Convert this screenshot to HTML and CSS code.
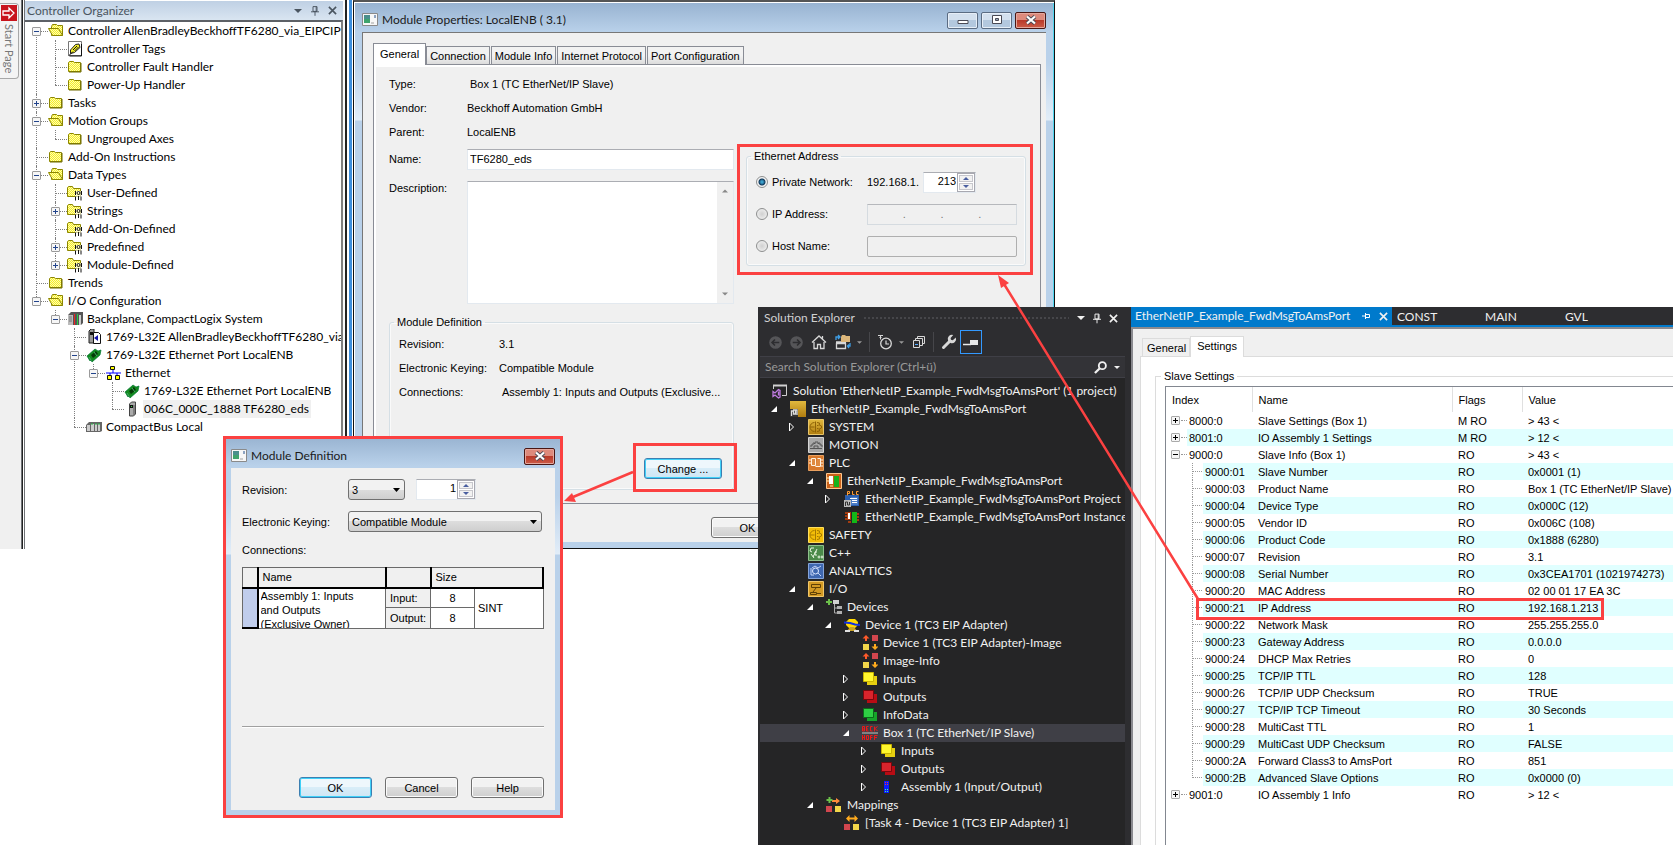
FILE: index.html
```html
<!DOCTYPE html>
<html lang="en">
<head>
<meta charset="utf-8">
<title>Module Properties: LocalENB</title>
<link rel="stylesheet" href="styles.css">
</head>
<body>
<svg class="defs" aria-hidden="true">
  <defs>
    <pattern id="dither" width="2" height="2" patternUnits="userSpaceOnUse"><rect width="2" height="2" fill="#f4ee2a"/><rect width="1" height="1" fill="#fffbb0"/><rect x="1" y="1" width="1" height="1" fill="#fffbb0"/></pattern>
    <linearGradient id="gold" x2="0" y2="1"><stop offset="0" stop-color="#e2b93e"/><stop offset="1" stop-color="#b07d10"/></linearGradient>
  </defs>
  <symbol id="folder" viewBox="0 0 16 16"><path d="M1.500 12.500V3.500l1-1h4l1 1h6v9z" fill="url(#dither)" stroke="#8c8600"/><path d="M14 4v9H2" fill="none" stroke="#6f6a00"/></symbol>
  <symbol id="open" viewBox="0 0 16 16"><path d="M3.500 12.500V3.500l1-2h4l1 1h5v10z" fill="url(#dither)" stroke="#8c8600"/><path d="M.5 5.500h10l4 7h-10z" fill="url(#dither)" stroke="#8c8600"/></symbol>
  <symbol id="typefolder" viewBox="0 0 16 16"><path d="M.5 11.500V2.500l1-1h4l1 2h7v8z" fill="url(#dither)" stroke="#8c8600"/><path d="M8 6h7v9H8z" fill="#fff" opacity=".6"/><g fill="none" stroke="#111"><path d="M8.500 6v4M14.500 6v4M8.500 11.500v4M11.500 11v4M14 11.500v4"/><circle cx="11.500" cy="8" r="1.500"/></g></symbol>
  <symbol id="tag" viewBox="0 0 16 16"><path d="M1.500.500h13v14h-13z" fill="#fff" stroke="#777"/><path d="M3.500 12.500V9l5-5.500 3.500-.5 1 3.500-5.500 5z" fill="#f4ee2a" stroke="#222"/><path d="M6 9l4-4M7.500 10l4-4M2 14.500l4-4M14.500 3v12h-12" fill="none" stroke="#111"/></symbol>
  <symbol id="rack" viewBox="0 0 16 16"><path d="M1 4l3-3h12v11l-2 2H1z" fill="#555"/><path d="M1 4h5v10H1z" fill="#bbb"/><path d="M2 6h3M2 8h3M2 10h3" stroke="#777"/><path d="M7 3h1v11H7z" fill="#e22"/><path d="M10 3h1v11h-1z" fill="#2c4"/><path d="M12 4h2v10h-2z" fill="#ccc"/></symbol>
  <symbol id="cpu" viewBox="0 0 16 16"><path d="M3 2l2-2h3v14H3z" fill="#999" stroke="#222"/><path d="M4 3h3v3H4z" fill="#111"/><path d="M7.500 3.500h5l2 2v9h-7z" fill="#fff" stroke="#111"/><path d="M12 6v6L8 9z" fill="#11a"/></symbol>
  <symbol id="card" viewBox="0 0 16 16"><path d="M1 9l8-7 3 2 3-1-1 5-8 7-1-2-1 1z" fill="#138a1e" stroke="#073" stroke-width=".7"/><path d="M5 8l5-4 2 3-5 4z" fill="#043a08"/><path d="M3 10l2 3M8 5l3 4" stroke="#4a6"/></symbol>
  <symbol id="net" viewBox="0 0 16 16"><path d="M8 4v4M1 8h15M5 8v3M12 8v3" stroke="#00f" fill="none"/><path d="M5.500 1.500h4v3h-4zM2.500 10.500h4v4h-4zM10.500 10.500h4v4h-4z" fill="#ff0" stroke="#111"/></symbol>
  <symbol id="module" viewBox="0 0 16 16"><path d="M5.500 3l2-2h4v12l-2 2h-4z" fill="#aaa" stroke="#444"/><path d="M6 4h3v3H6z" fill="#111"/><path d="M7 5h1v1H7z" fill="#3c4"/><path d="M10 4v10" stroke="#555"/></symbol>
  <symbol id="bus" viewBox="0 0 16 16"><path d="M0 6l3-3h13v9l-2 1H0z" fill="#666"/><path d="M1 6h3v6H1zM5 5h3v7H5zM9 5h2v7H9zM12 5h2v7h-2z" fill="#ccc"/><path d="M5 5h2M9 5h2M12 5h2" stroke="#2b4"/></symbol>
  <symbol id="app" viewBox="0 0 16 14"><path d="M.5.500h15v12H.5z" fill="#f7f7f7" stroke="#8a8a8a"/><path d="M2 2h6v8H2z" fill="#4a8f8c"/><path d="M2 6h6v4H2z" fill="#3fa36c"/><path d="M9 9h3v2H9z" fill="#ccc"/><path d="M13 2v3" stroke="#24508c"/></symbol>
  <symbol id="pin" viewBox="0 0 10 12"><path d="M2.500.500h5v6h-5zM0 7h10M5 7v5M6.500 1v6" fill="none" stroke="currentColor" stroke-width="1.200"/></symbol>
  <symbol id="cross" viewBox="0 0 10 10"><path d="M1 1l8 8M9 1l-8 8" fill="none" stroke="currentColor" stroke-width="1.800"/></symbol>
  <symbol id="down" viewBox="0 0 8 4"><path d="M0 0h8L4 4z" fill="currentColor"/></symbol>
  <symbol id="up" viewBox="0 0 8 4"><path d="M0 4h8L4 0z" fill="currentColor"/></symbol>
  <symbol id="bigx" viewBox="0 0 12 10"><path d="M2 1.500l8 7M10 1.500l-8 7" stroke="#4a4a55" stroke-width="4"/><path d="M2 1.500l8 7M10 1.500l-8 7" stroke="#fff" stroke-width="2.200"/></symbol>

  <symbol id="back" viewBox="0 0 12 12"><circle cx="6" cy="6" r="5.800" fill="#555558"/><path d="M9.500 6H3M5.500 3.200L2.800 6l2.700 2.800" fill="none" stroke="#2d2d30" stroke-width="1.500"/></symbol>
  <symbol id="fwd" viewBox="0 0 12 12"><circle cx="6" cy="6" r="5.800" fill="#555558"/><path d="M2.500 6H9M6.500 3.200L9.200 6 6.500 8.800" fill="none" stroke="#2d2d30" stroke-width="1.500"/></symbol>
  <symbol id="home" viewBox="0 0 16 16"><path d="M1 8.500L8 2l7 6.500M3 8v6.500h3.500v-4h3v4H13V8M11.500 4.500V2" fill="none" stroke="#d8d8d8" stroke-width="1.300"/></symbol>
  <symbol id="sync" viewBox="0 0 16 16"><path d="M1.500 9.500v5h9v-5zM1 8h10" fill="none" stroke="#d8d8d8" stroke-width="1.300"/><path d="M6 3l1-2h3l1 1h4v6H6z" fill="#dcb67a"/><path d="M1 6V3h3M3 1l2 2-2 2M15 9v3h-2M14 10.500L12.500 12l1.500 2" fill="none" stroke="#3fa0e8" stroke-width="1.300"/></symbol>
  <symbol id="clock" viewBox="0 0 16 16"><path d="M1 1.500h5M3.500 1.500v4M2.500 3.500h2" stroke="#d8d8d8" fill="none"/><circle cx="9" cy="9.500" r="5.300" fill="none" stroke="#d8d8d8" stroke-width="1.300"/><path d="M9 6.500V10h3" fill="none" stroke="#d8d8d8" stroke-width="1.200"/></symbol>
  <symbol id="collapse" viewBox="0 0 14 14"><path d="M5.500 4V1.500h7v7H10M3.500 6V3.500h7v7H8M1.500 5.500h6v7h-6z" fill="none" stroke="#d8d8d8"/><path d="M3 9.500h3" stroke="#55aaff"/></symbol>
  <symbol id="wrench" viewBox="0 0 16 16"><path d="M2.500 13.500L9 7" stroke="#d8d8d8" stroke-width="3" stroke-linecap="round"/><path d="M14.800 3.600l-3 2.600-1.900-.4-.3-1.900L12.200 1A4.200 4.200 0 0 0 7 6.400l2.600 2.700a4.200 4.200 0 0 0 5.200-5.500z" fill="#d8d8d8"/></symbol>
  <symbol id="preview" viewBox="0 0 16 8"><path d="M0 6.500h8" stroke="#e8e8e8" stroke-width="1.500"/><path d="M7 2h8v5H7z" fill="#e8e8e8"/></symbol>
  <symbol id="lens" viewBox="0 0 14 14"><circle cx="9" cy="5" r="3.800" fill="none" stroke="#f1f1f1" stroke-width="2"/><path d="M6 8l-5 5" stroke="#f1f1f1" stroke-width="2.400"/></symbol>

  <symbol id="sln" viewBox="0 0 16 16"><path d="M1.500 6V2.500h13v10H10" fill="none" stroke="#d0d0d0"/><path d="M1 2.500h14" stroke="#d0d0d0" stroke-width="2"/><path d="M6.500 6.500L3 10 1 8.500v5L3 12l3.500 3 1.500-.8V7.300zM6.500 8.500v4" fill="none" stroke="#c07be0" stroke-width="1.300"/></symbol>
  <symbol id="tcproj" viewBox="0 0 16 16"><path d="M0 0h16v16H0z" fill="url(#gold)"/><path d="M0 8h8v8H0z" fill="#333"/><path d="M1.500 15v-5h2v3h2v-3.500M3 9h4v5" fill="none" stroke="#ddd" stroke-width="1.300"/></symbol>
  <symbol id="system" viewBox="0 0 16 16"><path d="M.5.500h15v15H.5z" fill="url(#gold)" stroke="#e8c66a"/><path d="M7.500 2.500v11M6.500 3.500A4.500 4.500 0 0 0 6.500 12.500M9 3.500l2.500.5-.3 2L13.500 7v2l-2.300 1 .3 2-2.500.5M2.500 8h4M9 6.500h1.500M9 9.500h1.500" fill="none" stroke="#8e6206"/></symbol>
  <symbol id="motion" viewBox="0 0 16 16"><path d="M.5.500h15v15H.5z" fill="#a8a8a8" stroke="#d5d5d5"/><path d="M2 11.500h12M3 10V8h2V6h1l1 1V5h3v2l1-1h1v2h2v2M6 11V9h4v2" fill="none" stroke="#555"/></symbol>
  <symbol id="plc" viewBox="0 0 16 16"><path d="M.5.500h15v15H.5z" fill="#d8792c" stroke="#e9a05f"/><path d="M3.500 3.500h4v7h-4zM9.500 3.500h3v8h-5" fill="#e08a40" stroke="#fff3e3"/><path d="M1 5h2M1 8h2M13 5h2M13 8h2M13 11h2" stroke="#fff3e3"/></symbol>
  <symbol id="plcproj" viewBox="0 0 16 16"><path d="M.5.500h15v15H.5z" fill="#c9621a" stroke="#ffc78e"/><path d="M3 3h4v8H3z" fill="#fff"/><path d="M8 3h5v11H8z" fill="#17b31c"/><path d="M1 5h2M1 8h2M4 13h3" stroke="#fff0a8"/></symbol>
  <symbol id="plcdoc" viewBox="0 0 16 16"><path d="M1 4h14v11H1z" fill="#2b5fae"/><path d="M3.500 4.500V.500h2v2h-2M8.500 0v3.500h2M14.500.500h-2v3h2" fill="none" stroke="#ff9b30"/><path d="M7 6h7v8H7z" fill="#4b7cc4"/><path d="M6 7.500h7M8 9.500h5M8 11.500h5" stroke="#fff"/><path d="M0 9h7v7H0z" fill="#bbb"/><path d="M1.500 15v-4h2v3h2v-3" fill="none" stroke="#333"/></symbol>
  <symbol id="inst" viewBox="0 0 16 16"><path d="M3.500 3.500h3v7h-3z" fill="#fff" stroke="#b33c0a"/><path d="M8 3h5v11H8z" fill="#12b818"/><path d="M1 4h2M1 7h2M1 10h2M13 5h2M13 8h2M13 11h2M4 13h3" stroke="#d0440a" stroke-width="1.500"/></symbol>
  <symbol id="safety" viewBox="0 0 16 16"><path d="M.5.500h15v15H.5z" fill="#f3bd08" stroke="#ffdf5c"/><path d="M7.500 2.500v11M6.500 3.500A4.500 4.500 0 0 0 6.500 12.500M9 3.500l2.500.5-.3 2L13.500 7v2l-2.300 1 .3 2-2.500.5M2.500 8h4M9 6.500h1.500M9 9.500h1.500" fill="none" stroke="#a67a00"/></symbol>
  <symbol id="cpp" viewBox="0 0 16 16"><path d="M.5.500h15v15H.5z" fill="#4b8a4a" stroke="#8fc08c"/><path d="M6 3H3L2 6l2 1M5 12l4-8M9 7H7v3h2M9.500 12h3M11 10.500v3M13 12h2.500M14 10.500v3M3 9l3 4" fill="none" stroke="#e8f5e2"/></symbol>
  <symbol id="analytics" viewBox="0 0 16 16"><path d="M.5.500h15v15H.5z" fill="#3f68b0" stroke="#86a5da"/><circle cx="7.500" cy="8" r="3" fill="none" stroke="#dfe9ff"/><path d="M10 10l3 3M3 5v7h3M4 5l3-2 3 2 3-2" fill="none" stroke="#c5d5f8"/></symbol>
  <symbol id="io" viewBox="0 0 16 16"><path d="M.5.500h15v15H.5z" fill="#d39a24" stroke="#f0c668"/><path d="M3.500 3.500h9v3h-9zM2.500 11.500h6v2h-6zM8 7l-3 4M9 12.500h4" fill="none" stroke="#5f4005"/></symbol>
  <symbol id="devices" viewBox="0 0 16 16"><path d="M7 1h6v4H7z" fill="#d0d0d0"/><path d="M8.500 5v9H11M8.500 9H11" fill="none" stroke="#aaa"/><path d="M11 7h5v3h-5zM11 12h5v3h-5z" fill="#b0b0b0"/><path d="M3 0v6M0 3h6" stroke="#6cc04a" stroke-width="2"/></symbol>
  <symbol id="device" viewBox="0 0 16 16"><path d="M5 2h6l3 3v3l-3 3H5L2 8V5z" fill="#ffd800"/><path d="M0 5.500l6 .5 5 1.500 5 .5" fill="none" stroke="#1030e0" stroke-width="2"/><path d="M6 10h4l3 4H3z" fill="#c9a227"/><path d="M1 14h5M10 14h5" stroke="#e0e0e0" stroke-width="2"/></symbol>
  <symbol id="image" viewBox="0 0 16 16"><path d="M10 0h6v6h-6z" fill="#d2464e"/><path d="M1 9h6v6H1z" fill="#f2d64a"/><path d="M4 0l3.500 3.500H5V6H3V3.500H.500z" fill="#ff5a2a"/><path d="M13 15l3.500-3.500H14V9h-2v2.500H9.500z" fill="#ffab1e"/></symbol>
  <symbol id="in" viewBox="0 0 16 16"><path d="M5 5h10v9H5z" fill="#e6cf10"/><path d="M1.500 1.500h10v9h-10z" fill="#fff72e" stroke="#c9b400"/></symbol>
  <symbol id="out" viewBox="0 0 16 16"><path d="M5 5h10v9H5z" fill="#b80c14"/><path d="M1.500 1.500h10v9h-10z" fill="#d9242c" stroke="#7a060c"/></symbol>
  <symbol id="info" viewBox="0 0 16 16"><path d="M5 5h10v9H5z" fill="#16a52a"/><path d="M1.500 1.500h10v9h-10z" fill="#2ed044" stroke="#0a6a1a"/></symbol>
  <symbol id="box" viewBox="0 0 16 16"><path d="M0 8h16" stroke="#999" stroke-width="1.500"/><path d="M.5 1.500v4.500h2V1.500zM.5 4h2M6.500 1.500h-2v4.500h2M4.500 4h1.500M10.500 1.500h-2v4.500h2M12.500 1.500v5M15.500 1.500l-2.500 2 2.500 2.500M.5 10v5M2.500 10v5M.5 12.500h2M4.500 10.500h2v4h-2zM8.500 15v-4.500h2M8.500 12.500h2M12.500 15v-4.500h3M12.500 12.500h2.500" fill="none" stroke="#f01818"/></symbol>
  <symbol id="asm" viewBox="0 0 16 16"><path d="M4 2h5v12H4z" fill="#0a1cff"/><path d="M5 3h1v1H5zM7 3h1v1H7zM5 5h1v1H5zM7 5h1v1H7z" fill="#f33"/><path d="M5 10h1v1H5zM7 10h1v1H7zM5 12h1v1H5zM7 12h1v1H7z" fill="#4f8"/></symbol>
  <symbol id="maps" viewBox="0 0 16 16"><path d="M0 9h6v6H0z" fill="#d2464e"/><path d="M9 9h6v6H9z" fill="#f2d64a"/><path d="M6 3h4V1l4 3-4 3V5H6z" fill="#ff8a3a"/><path d="M3.500 0v6M.5 3h6" stroke="#6cc04a" stroke-width="2"/></symbol>
  <symbol id="task" viewBox="0 0 16 16"><path d="M0 9h6v6H0z" fill="#d2464e"/><path d="M9 9h6v6H9z" fill="#f2d64a"/><path d="M2 3.500L5.500 0v2.500h5V0L14 3.500 10.500 7V4.500h-5V7z" fill="#ffab1e"/></symbol>
  <symbol id="expanded" viewBox="0 0 8 10"><path d="M7 2v6H1z" fill="#fff"/></symbol>
  <symbol id="collapsed" viewBox="0 0 8 10"><path d="M1.500 1l4 4-4 4z" fill="none" stroke="#fff"/></symbol>
</svg>

<main class="desktop">

  <section class="organizer">
    <div class="dock">
      <button class="dock-tab"><svg width="16" height="16" viewBox="0 0 16 16"><path d="M0 0h16v16H0z" fill="#c8141c"/><path d="M2 6h6V3l5 5-5 5v-3H2z" fill="none" stroke="#fff" stroke-width="1.300"/></svg><span>Start Page</span></button>
    </div>
    <div class="organizer-panel">
      <header class="organizer-title">
        <h2>Controller Organizer</h2>
        <button class="plain" aria-label="Menu"><svg width="8" height="4"><use href="#down"/></svg></button>
        <button class="plain" aria-label="Pin"><svg width="8" height="10"><use href="#pin"/></svg></button>
        <button class="plain" aria-label="Close"><svg width="9" height="9"><use href="#cross"/></svg></button>
      </header>
      <ul class="tree">
        <li><div class="node"><button class="toggle" aria-label="Collapse"></button><svg><use href="#open"/></svg>Controller AllenBradleyBeckhoffTF6280_via_EIPCIP</div>
          <ul>
            <li><div class="node"><svg><use href="#tag"/></svg>Controller Tags</div></li>
            <li><div class="node"><svg><use href="#folder"/></svg>Controller Fault Handler</div></li>
            <li><div class="node"><svg><use href="#folder"/></svg>Power-Up Handler</div></li>
          </ul></li>
        <li><div class="node"><button class="toggle closed" aria-label="Expand"></button><svg><use href="#folder"/></svg>Tasks</div></li>
        <li><div class="node"><button class="toggle" aria-label="Collapse"></button><svg><use href="#open"/></svg>Motion Groups</div>
          <ul><li><div class="node"><svg><use href="#folder"/></svg>Ungrouped Axes</div></li></ul></li>
        <li><div class="node"><svg><use href="#folder"/></svg>Add-On Instructions</div></li>
        <li><div class="node"><button class="toggle" aria-label="Collapse"></button><svg><use href="#open"/></svg>Data Types</div>
          <ul>
            <li><div class="node"><svg><use href="#typefolder"/></svg>User-Defined</div></li>
            <li><div class="node"><button class="toggle closed" aria-label="Expand"></button><svg><use href="#typefolder"/></svg>Strings</div></li>
            <li><div class="node"><svg><use href="#typefolder"/></svg>Add-On-Defined</div></li>
            <li><div class="node"><button class="toggle closed" aria-label="Expand"></button><svg><use href="#typefolder"/></svg>Predefined</div></li>
            <li><div class="node"><button class="toggle closed" aria-label="Expand"></button><svg><use href="#typefolder"/></svg>Module-Defined</div></li>
          </ul></li>
        <li><div class="node"><svg><use href="#folder"/></svg>Trends</div></li>
        <li><div class="node"><button class="toggle" aria-label="Collapse"></button><svg><use href="#open"/></svg>I/O Configuration</div>
          <ul>
            <li><div class="node"><button class="toggle" aria-label="Collapse"></button><svg><use href="#rack"/></svg>Backplane, CompactLogix System</div>
              <ul>
                <li><div class="node"><svg><use href="#cpu"/></svg>1769-L32E AllenBradleyBeckhoffTF6280_via_EIPCIP</div></li>
                <li><div class="node"><button class="toggle" aria-label="Collapse"></button><svg><use href="#card"/></svg>1769-L32E Ethernet Port LocalENB</div>
                  <ul>
                    <li><div class="node"><button class="toggle" aria-label="Collapse"></button><svg><use href="#net"/></svg>Ethernet</div>
                      <ul>
                        <li><div class="node"><svg><use href="#card"/></svg>1769-L32E Ethernet Port LocalENB</div></li>
                        <li><div class="node"><svg><use href="#module"/></svg><span class="selected">006C_000C_1888 TF6280_eds</span></div></li>
                      </ul></li>
                  </ul></li>
                <li><div class="node"><svg><use href="#bus"/></svg>CompactBus Local</div></li>
              </ul></li>
          </ul></li>
      </ul>
    </div>
  </section>

  <section class="window properties">
    <header class="titlebar">
      <svg width="16" height="14"><use href="#app"/></svg>
      <h2>Module Properties: LocalENB ( 3.1)</h2>
      <button class="caption" aria-label="Minimize"><svg width="12" height="10" viewBox="0 0 12 10"><path d="M1 5.500h10v3H1z" fill="#fff" stroke="#4a4a55"/></svg></button>
      <button class="caption" aria-label="Maximize"><svg width="12" height="10" viewBox="0 0 12 10"><path d="M1.500.500h9v8h-9z" fill="#fff" stroke="#4a4a55"/><path d="M4.500 3.500h3v2h-3z" fill="#9ab" stroke="#4a4a55"/></svg></button>
      <button class="caption close" aria-label="Close"><svg width="12" height="10"><use href="#bigx"/></svg></button>
    </header>
    <div class="client">
      <div class="tabs" role="tablist">
        <button role="tab" aria-selected="true">General</button>
        <button role="tab">Connection</button>
        <button role="tab">Module Info</button>
        <button role="tab">Internet Protocol</button>
        <button role="tab">Port Configuration</button>
      </div>
      <div class="tabpage">
        <div class="left-column">
          <dl class="facts">
            <dt>Type:</dt><dd class="indented">Box 1 (TC EtherNet/IP Slave)</dd>
            <dt>Vendor:</dt><dd>Beckhoff Automation GmbH</dd>
            <dt>Parent:</dt><dd>LocalENB</dd>
          </dl>
          <div class="fields">
            <label for="name">Name:</label><input id="name" class="text" value="TF6280_eds">
            <label for="desc">Description:</label>
            <div class="memo"><textarea id="desc"></textarea>
              <div class="scroll"><svg width="6" height="4"><use href="#up"/></svg><svg width="6" height="4"><use href="#down"/></svg></div></div>
          </div>
          <fieldset class="group definition">
            <legend>Module Definition</legend>
            <dl class="facts">
              <dt>Revision:</dt><dd>3.1</dd>
              <dt>Electronic Keying:</dt><dd>Compatible Module</dd>
              <dt>Connections:</dt><dd class="indented">Assembly 1: Inputs and Outputs (Exclusive...</dd>
            </dl>
            <button class="btn primary change">Change ...</button>
          </fieldset>
        </div>
        <fieldset class="group address">
          <legend>Ethernet Address</legend>
          <input type="radio" name="addr" id="private" checked><label for="private">Private Network:</label>
          <div class="octet"><span>192.168.1.</span><span class="spinner"><input aria-label="Last octet" value="213"><span class="steps"><button aria-label="Up"><svg width="6" height="3"><use href="#up"/></svg></button><button aria-label="Down"><svg width="6" height="3"><use href="#down"/></svg></button></span></span></div>
          <input type="radio" name="addr" id="ip"><label for="ip">IP Address:</label>
          <div class="ipfield"><input aria-label="Octet 1" disabled>.<input aria-label="Octet 2" disabled>.<input aria-label="Octet 3" disabled>.<input aria-label="Octet 4" disabled></div>
          <input type="radio" name="addr" id="host"><label for="host">Host Name:</label>
          <input class="hostfield" aria-label="Host name value" disabled>
        </fieldset>
      </div>
      <footer class="actions"><button class="btn">OK</button></footer>
    </div>
  </section>

  <section class="window dialog">
    <header class="titlebar">
      <svg width="16" height="14"><use href="#app"/></svg>
      <h2>Module Definition</h2>
      <button class="caption close" aria-label="Close"><svg width="12" height="10"><use href="#bigx"/></svg></button>
    </header>
    <div class="client">
      <div class="form">
        <label for="rev">Revision:</label>
        <div class="revision"><span class="combo"><select id="rev"><option>3</option></select></span><span class="spinner"><input aria-label="Minor revision" value="1"><span class="steps"><button aria-label="Up"><svg width="6" height="3"><use href="#up"/></svg></button><button aria-label="Down"><svg width="6" height="3"><use href="#down"/></svg></button></span></span></div>
        <label for="keying">Electronic Keying:</label>
        <span class="combo keying"><select id="keying"><option>Compatible Module</option></select></span>
      </div>
      <p class="caption-text">Connections:</p>
      <table class="connections">
        <colgroup><col class="c-mark"><col class="c-name"><col class="c-dir"><col class="c-size"><col></colgroup>
        <thead><tr><th></th><th>Name</th><th></th><th colspan="2">Size</th></tr></thead>
        <tbody>
          <tr><td rowspan="2" class="mark"></td><td rowspan="2" class="name"><div>Assembly 1: Inputs<br>and Outputs<br>(Exclusive Owner)</div></td><td class="dir">Input:</td><td class="num">8</td><td rowspan="2" class="type">SINT</td></tr>
          <tr><td class="dir">Output:</td><td class="num">8</td></tr>
        </tbody>
      </table>
      <hr>
      <footer class="actions"><button class="btn primary">OK</button><button class="btn">Cancel</button><button class="btn">Help</button></footer>
    </div>
  </section>

  <section class="explorer">
    <header class="explorer-title">
      <h2>Solution Explorer</h2><span class="grip"></span>
      <button class="plain" aria-label="Menu"><svg width="8" height="4"><use href="#down"/></svg></button>
      <button class="plain" aria-label="Pin"><svg width="8" height="11"><use href="#pin"/></svg></button>
      <button class="plain" aria-label="Close"><svg width="9" height="9"><use href="#cross"/></svg></button>
    </header>
    <div class="toolbar">
      <button class="plain nav" aria-label="Back"><svg width="13" height="13"><use href="#back"/></svg></button>
      <button class="plain nav" aria-label="Forward"><svg width="13" height="13"><use href="#fwd"/></svg></button>
      <button class="plain" aria-label="Home"><svg width="16" height="16"><use href="#home"/></svg></button>
      <button class="plain split" aria-label="Sync"><svg width="16" height="16"><use href="#sync"/></svg><svg width="5" height="3"><use href="#down"/></svg></button>
      <span class="rule"></span>
      <button class="plain split" aria-label="Pending changes"><svg width="16" height="16"><use href="#clock"/></svg><svg width="5" height="3"><use href="#down"/></svg></button>
      <button class="plain" aria-label="Collapse all"><svg width="14" height="14"><use href="#collapse"/></svg></button>
      <span class="rule"></span>
      <button class="plain" aria-label="Properties"><svg width="16" height="16"><use href="#wrench"/></svg></button>
      <button class="plain active" aria-label="Preview"><svg width="16" height="8"><use href="#preview"/></svg></button>
    </div>
    <div class="search">
      <input aria-label="Search Solution Explorer" placeholder="Search Solution Explorer (Ctrl+ü)">
      <button class="plain" aria-label="Search"><svg width="13" height="13"><use href="#lens"/></svg></button>
      <button class="plain" aria-label="Search options"><svg width="6" height="3"><use href="#down"/></svg></button>
    </div>
    <ul class="solution">
      <li class="l0"><svg><use href="#sln"/></svg>Solution 'EtherNetIP_Example_FwdMsgToAmsPort' (1 project)</li>
      <li class="l1"><svg class="arrow"><use href="#expanded"/></svg><svg><use href="#tcproj"/></svg>EtherNetIP_Example_FwdMsgToAmsPort</li>
      <li class="l2"><svg class="arrow"><use href="#collapsed"/></svg><svg><use href="#system"/></svg>SYSTEM</li>
      <li class="l2"><i class="arrow"></i><svg><use href="#motion"/></svg>MOTION</li>
      <li class="l2"><svg class="arrow"><use href="#expanded"/></svg><svg><use href="#plc"/></svg>PLC</li>
      <li class="l3"><svg class="arrow"><use href="#expanded"/></svg><svg><use href="#plcproj"/></svg>EtherNetIP_Example_FwdMsgToAmsPort</li>
      <li class="l4"><svg class="arrow"><use href="#collapsed"/></svg><svg><use href="#plcdoc"/></svg>EtherNetIP_Example_FwdMsgToAmsPort Project</li>
      <li class="l4"><i class="arrow"></i><svg><use href="#inst"/></svg>EtherNetIP_Example_FwdMsgToAmsPort Instance</li>
      <li class="l2"><i class="arrow"></i><svg><use href="#safety"/></svg>SAFETY</li>
      <li class="l2"><i class="arrow"></i><svg><use href="#cpp"/></svg>C++</li>
      <li class="l2"><i class="arrow"></i><svg><use href="#analytics"/></svg>ANALYTICS</li>
      <li class="l2"><svg class="arrow"><use href="#expanded"/></svg><svg><use href="#io"/></svg>I/O</li>
      <li class="l3"><svg class="arrow"><use href="#expanded"/></svg><svg><use href="#devices"/></svg>Devices</li>
      <li class="l4"><svg class="arrow"><use href="#expanded"/></svg><svg><use href="#device"/></svg>Device 1 (TC3 EIP Adapter)</li>
      <li class="l5"><i class="arrow"></i><svg><use href="#image"/></svg>Device 1 (TC3 EIP Adapter)-Image</li>
      <li class="l5"><i class="arrow"></i><svg><use href="#image"/></svg>Image-Info</li>
      <li class="l5"><svg class="arrow"><use href="#collapsed"/></svg><svg><use href="#in"/></svg>Inputs</li>
      <li class="l5"><svg class="arrow"><use href="#collapsed"/></svg><svg><use href="#out"/></svg>Outputs</li>
      <li class="l5"><svg class="arrow"><use href="#collapsed"/></svg><svg><use href="#info"/></svg>InfoData</li>
      <li class="l5 current"><svg class="arrow"><use href="#expanded"/></svg><svg><use href="#box"/></svg>Box 1 (TC EtherNet/IP Slave)</li>
      <li class="l6"><svg class="arrow"><use href="#collapsed"/></svg><svg><use href="#in"/></svg>Inputs</li>
      <li class="l6"><svg class="arrow"><use href="#collapsed"/></svg><svg><use href="#out"/></svg>Outputs</li>
      <li class="l6"><svg class="arrow"><use href="#collapsed"/></svg><svg><use href="#asm"/></svg>Assembly 1 (Input/Output)</li>
      <li class="l3"><svg class="arrow"><use href="#expanded"/></svg><svg><use href="#maps"/></svg>Mappings</li>
      <li class="l4"><i class="arrow"></i><svg><use href="#task"/></svg>[Task 4 - Device 1 (TC3 EIP Adapter) 1]</li>
    </ul>
  </section>

  <section class="editor">
    <nav class="documents">
      <a href="#doc" class="open"><span>EtherNetIP_Example_FwdMsgToAmsPort</span><svg width="8" height="8" viewBox="0 0 8 8"><path d="M0 4h3M3.500 1v6M3.500 2.500h4v3h-4" fill="none" stroke="#fff"/></svg><svg width="9" height="9"><use href="#cross"/></svg></a>
      <a href="#const">CONST</a><a href="#main">MAIN</a><a href="#gvl">GVL</a>
    </nav>
    <div class="document">
      <div class="doc-tabs" role="tablist"><button role="tab">General</button><button role="tab" aria-selected="true">Settings</button></div>
      <div class="doc-page">
        <fieldset class="slave">
          <legend>Slave Settings</legend>
          <div class="listview">
          <table>
            <colgroup><col class="c-index"><col class="c-label"><col class="c-flags"><col></colgroup>
            <thead><tr><th>Index</th><th>Name</th><th>Flags</th><th>Value</th></tr></thead>
            <tbody>
              <tr class="top"><td><button class="toggle closed" aria-label="Expand"></button>8000:0</td><td>Slave Settings (Box 1)</td><td>M RO</td><td>&gt; 43 &lt;</td></tr>
              <tr class="top"><td><button class="toggle closed" aria-label="Expand"></button>8001:0</td><td>IO Assembly 1 Settings</td><td>M RO</td><td>&gt; 12 &lt;</td></tr>
              <tr class="top"><td><button class="toggle" aria-label="Collapse"></button>9000:0</td><td>Slave Info (Box 1)</td><td>RO</td><td>&gt; 43 &lt;</td></tr>
              <tr><td>9000:01</td><td>Slave Number</td><td>RO</td><td>0x0001 (1)</td></tr>
              <tr><td>9000:03</td><td>Product Name</td><td>RO</td><td>Box 1 (TC EtherNet/IP Slave)</td></tr>
              <tr><td>9000:04</td><td>Device Type</td><td>RO</td><td>0x000C (12)</td></tr>
              <tr><td>9000:05</td><td>Vendor ID</td><td>RO</td><td>0x006C (108)</td></tr>
              <tr><td>9000:06</td><td>Product Code</td><td>RO</td><td>0x1888 (6280)</td></tr>
              <tr><td>9000:07</td><td>Revision</td><td>RO</td><td>3.1</td></tr>
              <tr><td>9000:08</td><td>Serial Number</td><td>RO</td><td>0x3CEA1701 (1021974273)</td></tr>
              <tr><td>9000:20</td><td>MAC Address</td><td>RO</td><td>02 00 01 17 EA 3C</td></tr>
              <tr><td>9000:21</td><td>IP Address</td><td>RO</td><td>192.168.1.213</td></tr>
              <tr><td>9000:22</td><td>Network Mask</td><td>RO</td><td>255.255.255.0</td></tr>
              <tr><td>9000:23</td><td>Gateway Address</td><td>RO</td><td>0.0.0.0</td></tr>
              <tr><td>9000:24</td><td>DHCP Max Retries</td><td>RO</td><td>0</td></tr>
              <tr><td>9000:25</td><td>TCP/IP TTL</td><td>RO</td><td>128</td></tr>
              <tr><td>9000:26</td><td>TCP/IP UDP Checksum</td><td>RO</td><td>TRUE</td></tr>
              <tr><td>9000:27</td><td>TCP/IP TCP Timeout</td><td>RO</td><td>30 Seconds</td></tr>
              <tr><td>9000:28</td><td>MultiCast TTL</td><td>RO</td><td>1</td></tr>
              <tr><td>9000:29</td><td>MultiCast UDP Checksum</td><td>RO</td><td>FALSE</td></tr>
              <tr><td>9000:2A</td><td>Forward Class3 to AmsPort</td><td>RO</td><td>851</td></tr>
              <tr class="end"><td>9000:2B</td><td>Advanced Slave Options</td><td>RO</td><td>0x0000 (0)</td></tr>
              <tr class="top"><td><button class="toggle closed" aria-label="Expand"></button>9001:0</td><td>IO Assembly 1 Info</td><td>RO</td><td>&gt; 12 &lt;</td></tr>
            </tbody>
          </table>
          </div>
        </fieldset>
      </div>
    </div>
  </section>

  <svg class="marks" width="1673" height="845" viewBox="0 0 1673 845" aria-hidden="true">
    <g fill="none" stroke="#fb4141" stroke-width="3">
      <rect x="738.500" y="145.500" width="293" height="128"/>
      <rect x="634.500" y="444.500" width="101" height="46"/>
      <rect x="224.500" y="437.500" width="337" height="379"/>
      <rect x="1197.500" y="599.500" width="405" height="19"/>
      <path d="M633 472l-60 25M1198 599L1004 284" stroke-width="2.500"/>
    </g>
    <path d="M564 501l8-8 4 9zM998 275l11 8-8 5z" fill="#fb4141"/>
  </svg>
</main>
</body>
</html>
```

FILE: styles.css
```css
* { box-sizing: border-box; }
body {
  margin: 0;
  background: #fff;
  color: #000;
  font: 11px/14px "Liberation Sans", Arial, sans-serif;
}
h2, p, dl, dd, ul { margin: 0; padding: 0; }
ul { list-style: none; }
button, input, select, textarea { font: inherit; color: inherit; margin: 0; }
button { padding: 0; }
svg { display: block; flex: none; }
fieldset { min-width: 0; margin: 0; padding: 0; }
.defs { position: absolute; width: 0; height: 0; }
.desktop { position: relative; min-height: 100vh; overflow: hidden; }
.marks { position: absolute; left: 0; top: 0; pointer-events: none; }
.plain { display: flex; align-items: center; justify-content: center; border: 0; background: none; }
h2, .tree, .dock-tab, .explorer, .documents { font: 12px/18px Lato, "Noto Sans", sans-serif; }
h2 { white-space: nowrap; }

/* Controller organizer */
.organizer {
  position: absolute; left: 0; top: 0;
  display: flex;
  width: 352px; min-height: 549px;
}
.dock { width: 21px; padding-top: 3px; background: #f0f0f0; }
.dock-tab {
  display: flex; flex-direction: column; align-items: center; gap: 3px;
  width: 19px; height: 76px; padding: 1px;
  border: 1px solid #a8a8a8; border-left: 0; border-radius: 0 4px 4px 0;
  background: #f4f4f4; color: #777;
  line-height: 16px; font-size: 11px;
}
.dock-tab span { writing-mode: vertical-rl; }
.organizer-panel {
  flex: 1; display: flex; flex-direction: column; min-width: 0;
  padding: 1px 6px 0 0;
  border-left: 4px double #6f7276;
  border-right: 3px solid #3c8edc;
  background: linear-gradient(to right, transparent 318px, #fafafa 318px, #fafafa 320px, #222 320px, #222 322px, #fff 322px) #fff;
}
.organizer-title {
  display: flex; align-items: center; gap: 9px;
  height: 19px; padding: 0 6px 0 2px;
  background: linear-gradient(#bfd0e4, #d9e5f1);
  color: #4a5560;
}
.organizer-title h2 { flex: 1; }
.tree { overflow: hidden; white-space: nowrap; }
.organizer-panel > .tree {
  flex: 1;
  padding: 0 0 0 7px;
  border: 1px solid #5c6066; border-width: 2px 2px 0 0;
  border-right-color: #808080;
}
.tree ul { margin-left: 19px; }
.tree li { position: relative; }
.tree li::before {
  content: ""; position: absolute; left: 4px; top: 0; bottom: 0;
  border-left: 1px dotted #808080;
}
.tree li:last-child::before { bottom: auto; height: 9px; }
.organizer-panel > .tree > li:first-child::before { top: 9px; }
.node { position: relative; display: flex; align-items: center; height: 18px; padding-left: 16px; }
.node::before { content: ""; position: absolute; left: 4px; top: 9px; width: 12px; border-top: 1px dotted #808080; }
.node svg { width: 16px; height: 16px; margin-right: 4px; }
.toggle {
  position: absolute; left: 0; top: 5px;
  width: 9px; height: 9px;
  border: 1px solid #9a9a9a; border-radius: 1px;
  background: linear-gradient(#22448c, #22448c) center / 5px 1px no-repeat, #f6f6f6;
}
.toggle.closed { background: linear-gradient(#22448c, #22448c) center / 5px 1px no-repeat, linear-gradient(#22448c, #22448c) center / 1px 5px no-repeat, #f6f6f6; }
.selected { margin-left: -1px; padding: 0 2px 0 1px; background: #f0f0f0; }

/* Classic windows */
.window {
  position: absolute;
  padding: 0 8px 6px;
  background: linear-gradient(#97b2d0 0, #b9d1ea 30px, #b9d1ea 60px, #e2edf8 118px, #b9d1ea 119px);
}
.titlebar { display: flex; align-items: center; gap: 3px; height: 30px; padding-top: 6px; }
.titlebar h2 { flex: 1; padding-left: 1px; color: #1a1a1a; }
.caption {
  display: grid; place-items: center;
  width: 31px; height: 17px;
  border: 1px solid #5b6c82; border-radius: 2px;
  background: linear-gradient(#d3e0ee 50%, #b3c8de 50%);
  box-shadow: inset 0 0 0 1px #e6eef7;
}
.caption.close { border-color: #4a1714; background: linear-gradient(#dd8a7c 45%, #b93a2a 50%, #cc5c48); box-shadow: inset 0 0 0 1px #e4a79c; }
.client { background: #f0f0f0; }
.properties { left: 353px; top: 0; width: 702px; border: 1px solid #111; border-top: 2px solid #555; box-shadow: inset 1px 1px #fff, inset -1px 0 #4fd6f0; }
.properties .client { padding: 10px 5px 4px 10px; border: 1px solid #777; border-width: 1px 0 0 1px; }
.tabs { display: flex; align-items: flex-end; gap: 1px; height: 21px; }
.tabs button {
  height: 18px; padding: 0 3px;
  border: 1px solid #898c95; border-bottom: 0;
  background: linear-gradient(#f2f2f2 50%, #dcdcdc);
}
.tabs [aria-selected] { position: relative; height: 22px; margin-bottom: -1px; margin-right: -1px; padding: 0 6px 2px; background: #fff; }
.tabpage {
  display: grid; grid-template-columns: 345px 1fr; column-gap: 12px;
  padding: 7px 14px 13px 15px;
  border: 1px solid #898c95;
  box-shadow: inset 2px 2px #fff;
  align-items: start;
}
.facts { display: grid; grid-template-columns: 78px 1fr; line-height: 24px; white-space: nowrap; }
dd.indented { padding-left: 3px; }
.fields { display: grid; grid-template-columns: 78px 1fr; row-gap: 11px; padding-top: 5px; line-height: 20px; }
.fields label[for="desc"] { line-height: 14px; }
.text, .memo { border: 1px solid #e3e9ef; border-top-color: #abadb3; background: #fff; }
.text { height: 21px; padding: 0 2px 2px; }
.memo { display: flex; height: 123px; }
.memo textarea { flex: 1; min-width: 0; border: 0; resize: none; background: none; overflow: hidden; }
.scroll { display: flex; flex-direction: column; justify-content: space-between; align-items: center; width: 16px; padding: 7px 0; background: #f0f0f0; color: #888; }
.group { border: 1px solid #d5dfe5; border-radius: 3px; box-shadow: inset 0 0 0 1px #fafafa; }
.group legend { margin-left: -5px; padding: 0 3px; }
.definition { margin-top: 11px; padding: 3px 11px 10px 9px; }
.definition .facts { grid-template-columns: 100px 1fr; }
.change { display: block; width: 78px; margin: 54px 0 0 auto; }
.btn {
  height: 21px; border: 1px solid #707070; border-radius: 3px;
  background: linear-gradient(#f2f2f2 50%, #dddddd 50%, #cfcfcf);
  box-shadow: inset 0 0 0 1px #fbfbfb;
}
.btn.primary { border-color: #3c7fb1; background: linear-gradient(#eef7fc 50%, #d8edf8 50%, #cfe6f4); box-shadow: inset 0 0 0 1px #3fd0f8; }
.address {
  display: grid; grid-template-columns: 12px 91px 1fr; column-gap: 4px;
  grid-auto-rows: 32px; align-items: center;
  margin-top: 77px; padding: 3px 9px;
  white-space: nowrap;
}
input[type="radio"] { appearance: none; width: 12px; height: 12px; border: 1px solid #8e8f8f; border-radius: 50%; background: radial-gradient(#d0d0d0, #f6f6f6); }
input[type="radio"]:checked { background: radial-gradient(#3aa0cc 0 1px, #123a5c 3px, #f4f4f4 4px); }
.octet { display: flex; gap: 4px; align-items: center; }
.spinner { display: flex; width: 53px; height: 21px; background: #fff; border: 1px solid #e3e9ef; border-top-color: #abadb3; }
.spinner > input { flex: 1; min-width: 0; border: 0; padding: 0 1px 3px 0; text-align: right; background: none; }
.steps { display: grid; grid-template-rows: 1fr 1fr; width: 18px; border: 1px solid #a8a8b0; gap: 1px; padding: 1px; }
.steps button { display: grid; place-items: center; border: 1px solid #c6c6cc; background: #f2f2f2; color: #4a5fa0; }
.ipfield, .hostfield { width: 150px; height: 21px; border: 1px solid #d5dbe0; border-top-color: #b6b8bc; background: #f0f0f0; }
.hostfield { border-color: #afafaf; border-radius: 2px; }
.ipfield { display: flex; align-items: center; color: #777; }
.ipfield input { flex: 1; min-width: 0; border: 0; padding: 0; background: none; }
.properties .actions { padding: 13px 0 0 338px; }
.actions .btn { width: 73px; }

.dialog { left: 223px; top: 436px; width: 340px; padding: 2px 8px 8px; }
.dialog .client { padding: 11px 11px 12px; }
.form { display: grid; grid-template-columns: 106px 1fr; row-gap: 11px; align-items: center; }
.revision { display: flex; gap: 11px; }
.revision .combo { width: 57px; }
.revision .spinner { width: 60px; }
.combo { position: relative; display: block; }
.combo::after { content: ""; position: absolute; right: 5px; top: 9px; width: 7px; height: 4px; background: #000; clip-path: polygon(0 0, 100% 0, 50% 100%); }
.combo select { appearance: none; width: 100%; height: 21px; padding: 0 3px; border: 1px solid #707070; border-radius: 3px; background: linear-gradient(#f2f2f2 50%, #dddddd 50%, #cfcfcf); }
.keying { width: 194px; }
.caption-text { padding: 11px 0 10px; }
.connections { width: 302px; table-layout: fixed; border-collapse: collapse; border: 1px solid #6a6a6a; background: #fff; }
.connections th { height: 20px; padding: 0 4px; text-align: left; font-weight: normal; background: #f0f0f0; border: 1px solid #6a6a6a; border-right: 2px solid #000; border-bottom: 2px solid #000; }
.connections td { height: 20px; padding: 0 4px; border: 1px solid #6a6a6a; }
.c-mark { width: 15px; } .c-name { width: 128px; } .c-dir { width: 45px; } .c-size { width: 44px; }
.connections .mark { background: #c0cdec; border-right: 2px solid #000; border-bottom: 2px solid #000; }
.connections .name { padding: 0 2px; vertical-align: top; }
.name div { height: 39px; overflow: hidden; }
.connections .dir { background: #f0f0f0; }
.connections .num { text-align: center; }
.connections .type { padding: 0 3px; }
.client hr { height: 2px; margin: 97px 0 49px; border: 0; background: #a0a0a0; border-bottom: 1px solid #fff; }
.dialog .actions { display: flex; justify-content: flex-end; gap: 13px; }

/* Solution explorer */
.explorer {
  position: absolute; left: 758px; top: 307px; bottom: 0; width: 373px;
  display: flex; flex-direction: column;
  padding: 0 6px 0 2px;
  background: #2d2d30; color: #f1f1f1;
}
.explorer-title { display: flex; align-items: center; gap: 8px; height: 22px; padding: 0 7px 0 4px; }
.explorer-title h2 { color: #d0d0d0; }
.grip { flex: 1; height: 5px; background: radial-gradient(#46464a 1px, transparent 1px) 0 0 / 4px 4px; }
.toolbar { display: flex; align-items: center; gap: 8px; height: 26px; padding-left: 9px; color: #999; }
.split { gap: 6px; }
.rule { width: 1px; height: 20px; margin: 0 -1px; background: #46464a; }
.active { width: 22px; height: 24px; margin-left: -5px; border: 1px solid #3399ff; }
.search { display: flex; align-items: center; gap: 7px; height: 22px; margin-top: 1px; padding: 0 5px; background: #333337; border-bottom: 1px solid #3f3f46; border-top: 1px solid #3f3f46; }
.search input { flex: 1; padding: 0; border: 0; background: none; outline: 0; }
.search input::placeholder { color: #999; opacity: 1; }
.solution { flex: 1; padding-top: 4px; background: #252526; overflow: hidden; white-space: nowrap; }
.solution li { display: flex; align-items: center; height: 18px; }
.solution svg { width: 16px; height: 16px; margin-right: 5px; }
.solution .arrow { flex: none; width: 8px; height: 10px; margin-right: 12px; }
.solution .l0 { padding-left: 12px; }
.solution .l1 { padding-left: 10px; }
.solution .l2 { padding-left: 28px; }
.solution .l3 { padding-left: 46px; }
.solution .l4 { padding-left: 64px; }
.solution .l5 { padding-left: 82px; }
.solution .l6 { padding-left: 100px; }
.solution .current { background: #3f3f46; }

/* Editor */
.editor { position: absolute; left: 1131px; right: 0; top: 307px; bottom: 0; display: flex; flex-direction: column; background: #f0f0f0; }
.documents { display: flex; height: 20px; border-bottom: 2px solid #007acc; background: #2d2d30; }
.documents a { width: 80px; line-height: 20px; color: #f1f1f1; text-decoration: none; white-space: nowrap; }
.documents .open { display: flex; align-items: center; gap: 9px; width: 261px; padding: 0 4px; background: #007acc; }
.documents .open span { flex: 1; }
.documents .open + a { width: 93px; padding-left: 5px; }
.document { flex: 1; display: flex; flex-direction: column; padding: 7px 0 0 7px; border: 2px solid #8a8a8f; border-right: 0; border-bottom: 0; }
.doc-tabs { display: flex; align-items: flex-end; height: 20px; padding-left: 2px; }
.doc-tabs button { height: 18px; padding: 0 3px 0 4px; border: 1px solid #dcdcdc; border-bottom: 0; background: #f0f0f0; }
.doc-tabs [aria-selected] { position: relative; height: 21px; margin-bottom: -1px; padding: 0 6px 2px; background: #fff; }
.doc-page { flex: 1; display: flex; padding: 12px 0 0 14px; border: 1px solid #dcdcdc; border-right: 0; border-bottom: 0; background: #fff; }
.slave { flex: 1; display: flex; padding: 3px 0 0 9px; border: 1px solid #dcdcdc; border-right: 0; border-bottom: 0; }
.slave legend { margin-left: -4px; padding: 0 3px; }
.listview { flex: 1; border: 1px solid #828790; border-right: 0; border-bottom: 0; }
.listview table { width: 100%; table-layout: fixed; border-collapse: collapse; white-space: nowrap; }
.c-index { width: 86px; } .c-label { width: 200px; } .c-flags { width: 70px; }
.listview th { height: 25px; padding: 0 6px; text-align: left; font-weight: normal; border-right: 1px solid #e0e0e0; }
.listview th:last-child { border: 0; }
.listview td { position: relative; height: 17px; padding: 0 6px; }
.listview td:first-child { padding: 0 0 0 39px; }
.listview .top td:first-child { padding-left: 23px; }
.listview tbody tr:nth-child(even) td { background: #e0ffff; }
.listview tbody tr:nth-child(even) td:first-child { background: linear-gradient(to right, #fff 37px, #e0ffff 37px); }
.listview .top:nth-child(even) td:first-child { background: linear-gradient(to right, #fff 21px, #e0ffff 21px); }
.listview td:first-child::before { content: ""; position: absolute; left: 26px; top: 8px; width: 10px; border-top: 1px dotted #999; }
.listview td:first-child::after { content: ""; position: absolute; left: 26px; top: 0; height: 17px; border-left: 1px dotted #999; }
.listview .end td:first-child::after { height: 9px; }
.listview .top td:first-child::before { left: 15px; width: 6px; }
.listview .top td:first-child::after { display: none; }
.listview .toggle { left: 5px; top: 4px; border-color: #aaa; background-image: linear-gradient(#000, #000); }
.listview .toggle.closed { background-image: linear-gradient(#000, #000), linear-gradient(#000, #000); }
```
